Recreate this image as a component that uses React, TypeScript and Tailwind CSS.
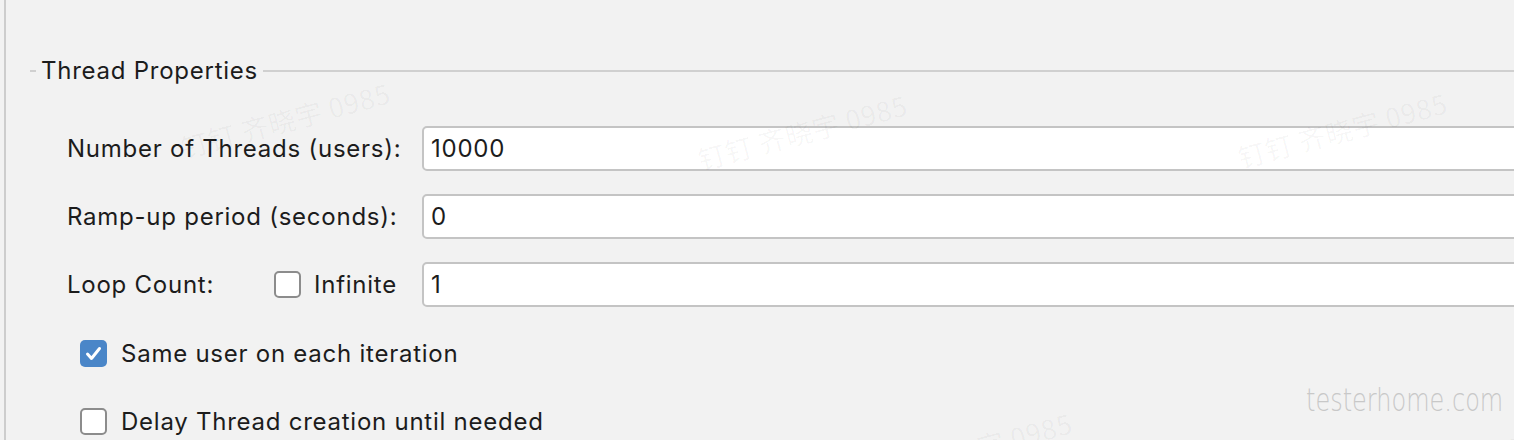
import React from "react";

const Watermark = ({ className }: { className: string }) => (
  <div
    className={`pointer-events-none absolute whitespace-nowrap text-[27px] text-black/[0.04] -rotate-[15deg] ${className}`}
    style={{ fontFamily: '"Noto Sans CJK SC", "Noto Sans", sans-serif' }}
  >
    钉钉 齐晓宇 0985
  </div>
);

const Checkbox = ({ checked }: { checked?: boolean }) =>
  checked ? (
    <div className="flex h-[27px] w-[27px] shrink-0 items-center justify-center rounded-[5px] bg-[#4a86c8]">
      <svg width="17" height="15" viewBox="0 0 17 15" fill="none">
        <path d="M2.5 8 L6.5 12.5 L14.5 2.5" stroke="white" strokeWidth="3" strokeLinecap="round" strokeLinejoin="round" />
      </svg>
    </div>
  ) : (
    <div className="h-[27px] w-[27px] shrink-0 rounded-[5px] border-2 border-[#8c8c8c] bg-white" />
  );

const Field = ({ value }: { value: string }) => (
  <div className="mr-[-12px] flex h-[45px] flex-1 items-center rounded-[5px] border-2 border-[#c4c4c4] bg-white pl-[7px]">
    {value}
  </div>
);

export default function App() {
  return (
    <div
      className="relative flex h-[440px] w-[1514px] overflow-hidden bg-[#f2f2f2] text-[24px] tracking-[0.75px] text-[#1c1c1c]"
      style={{ fontFamily: 'Inter, "Noto Sans", sans-serif' }}
    >
      <div className="ml-[4px] flex flex-1 flex-col border-l-2 border-[#cdcdcd] pt-[56px]">
        <div className="ml-[24px] flex h-[30px] items-center">
          <div className="h-[2px] w-[6px] bg-[#d0d0d0]" />
          <div className="px-[5px] leading-none">Thread Properties</div>
          <div className="h-[2px] flex-1 bg-[#d0d0d0]" />
        </div>

        <div className="mt-[40px] flex flex-col gap-[23px]">
          <div className="flex items-center">
            <div className="w-[416px] pl-[61px]">Number of Threads (users):</div>
            <Field value="10000" />
          </div>
          <div className="flex items-center">
            <div className="w-[416px] pl-[61px]">Ramp-up period (seconds):</div>
            <Field value="0" />
          </div>
          <div className="flex items-center">
            <div className="flex w-[416px] items-center pl-[61px]">
              <div className="w-[207px]">Loop Count:</div>
              <Checkbox />
              <div className="ml-[13px]">Infinite</div>
            </div>
            <Field value="1" />
          </div>
        </div>

        <div className="ml-[74px] mt-[33px] flex flex-col gap-[41px]">
          <div className="flex h-[27px] items-center gap-[14px] leading-[27px]">
            <Checkbox checked />
            <div>Same user on each iteration</div>
          </div>
          <div className="flex h-[27px] items-center gap-[14px] leading-[27px]">
            <Checkbox />
            <div>Delay Thread creation until needed</div>
          </div>
        </div>
      </div>

      <Watermark className="left-[178px] top-[100px]" />
      <Watermark className="left-[695px] top-[112px]" />
      <Watermark className="left-[1235px] top-[110px]" />
      <Watermark className="left-[860px] top-[430px]" />
      <Watermark className="left-[1390px] top-[432px]" />

      <div
        className="pointer-events-none absolute left-[1306px] top-[392px] origin-bottom scale-y-[1.35] text-[24px] leading-none tracking-[0px] text-[#c8c8c8]"
        style={{ fontFamily: '"DejaVu Sans", sans-serif', fontWeight: 200 }}
      >
        testerhome.com
      </div>
    </div>
  );
}
